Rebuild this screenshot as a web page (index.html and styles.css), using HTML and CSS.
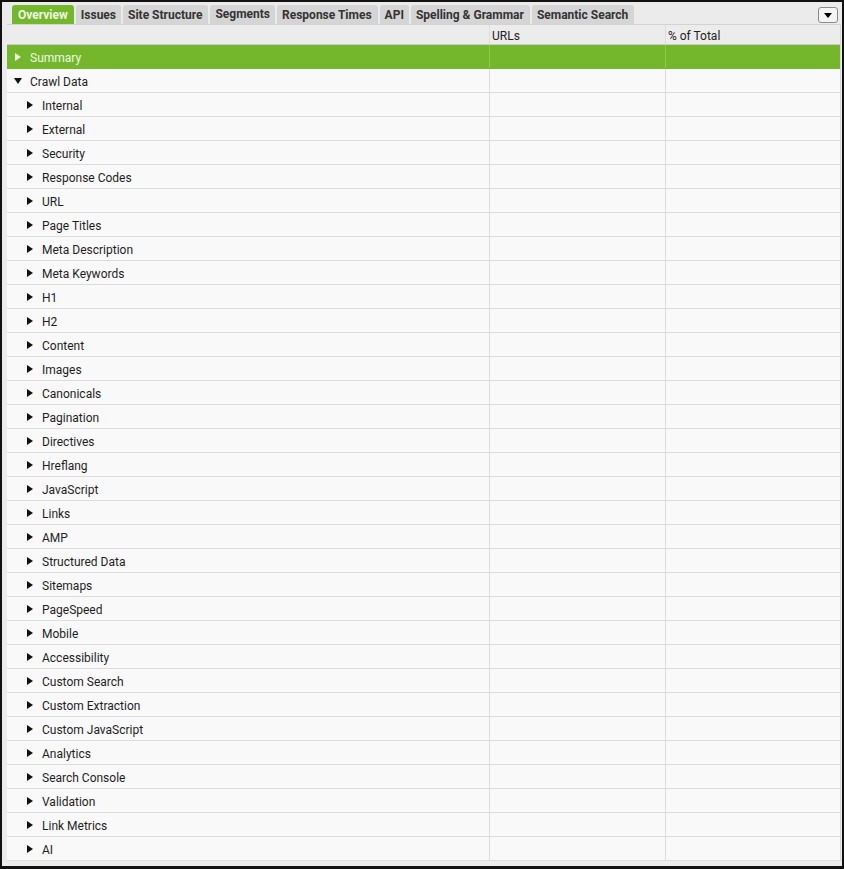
FILE: index.html
```html
<!DOCTYPE html>
<html>
<head>
<meta charset="utf-8">
<link rel="stylesheet" href="styles.css">
</head>
<body>
<div class="frame">
  <div class="tabbar">
    <div class="tabs">
      <div class="tab active">Overview</div>
      <div class="tab narrow">Issues</div>
      <div class="tab">Site Structure</div>
      <div class="tab hover narrow">Segments</div>
      <div class="tab">Response Times</div>
      <div class="tab narrow">API</div>
      <div class="tab">Spelling &amp; Grammar</div>
      <div class="tab">Semantic Search</div>
    </div>
    <div class="menu-btn"><span class="down-tri"></span></div>
  </div>
  <div class="table">
    <div class="row head">
      <div class="cell"></div>
      <div class="cell">URLs</div>
      <div class="cell">% of Total</div>
    </div>
    <div class="row selected">
      <div class="cell name lvl0"><span class="tri right"></span>Summary</div>
      <div class="cell"></div>
      <div class="cell"></div>
    </div>
    <div class="row">
      <div class="cell name lvl0"><span class="tri down"></span>Crawl Data</div>
      <div class="cell"></div>
      <div class="cell"></div>
    </div>
    <div class="row"><div class="cell name lvl1"><span class="tri right"></span>Internal</div><div class="cell"></div><div class="cell"></div></div>
    <div class="row"><div class="cell name lvl1"><span class="tri right"></span>External</div><div class="cell"></div><div class="cell"></div></div>
    <div class="row"><div class="cell name lvl1"><span class="tri right"></span>Security</div><div class="cell"></div><div class="cell"></div></div>
    <div class="row"><div class="cell name lvl1"><span class="tri right"></span>Response Codes</div><div class="cell"></div><div class="cell"></div></div>
    <div class="row"><div class="cell name lvl1"><span class="tri right"></span>URL</div><div class="cell"></div><div class="cell"></div></div>
    <div class="row"><div class="cell name lvl1"><span class="tri right"></span>Page Titles</div><div class="cell"></div><div class="cell"></div></div>
    <div class="row"><div class="cell name lvl1"><span class="tri right"></span>Meta Description</div><div class="cell"></div><div class="cell"></div></div>
    <div class="row"><div class="cell name lvl1"><span class="tri right"></span>Meta Keywords</div><div class="cell"></div><div class="cell"></div></div>
    <div class="row"><div class="cell name lvl1"><span class="tri right"></span>H1</div><div class="cell"></div><div class="cell"></div></div>
    <div class="row"><div class="cell name lvl1"><span class="tri right"></span>H2</div><div class="cell"></div><div class="cell"></div></div>
    <div class="row"><div class="cell name lvl1"><span class="tri right"></span>Content</div><div class="cell"></div><div class="cell"></div></div>
    <div class="row"><div class="cell name lvl1"><span class="tri right"></span>Images</div><div class="cell"></div><div class="cell"></div></div>
    <div class="row"><div class="cell name lvl1"><span class="tri right"></span>Canonicals</div><div class="cell"></div><div class="cell"></div></div>
    <div class="row"><div class="cell name lvl1"><span class="tri right"></span>Pagination</div><div class="cell"></div><div class="cell"></div></div>
    <div class="row"><div class="cell name lvl1"><span class="tri right"></span>Directives</div><div class="cell"></div><div class="cell"></div></div>
    <div class="row"><div class="cell name lvl1"><span class="tri right"></span>Hreflang</div><div class="cell"></div><div class="cell"></div></div>
    <div class="row"><div class="cell name lvl1"><span class="tri right"></span>JavaScript</div><div class="cell"></div><div class="cell"></div></div>
    <div class="row"><div class="cell name lvl1"><span class="tri right"></span>Links</div><div class="cell"></div><div class="cell"></div></div>
    <div class="row"><div class="cell name lvl1"><span class="tri right"></span>AMP</div><div class="cell"></div><div class="cell"></div></div>
    <div class="row"><div class="cell name lvl1"><span class="tri right"></span>Structured Data</div><div class="cell"></div><div class="cell"></div></div>
    <div class="row"><div class="cell name lvl1"><span class="tri right"></span>Sitemaps</div><div class="cell"></div><div class="cell"></div></div>
    <div class="row"><div class="cell name lvl1"><span class="tri right"></span>PageSpeed</div><div class="cell"></div><div class="cell"></div></div>
    <div class="row"><div class="cell name lvl1"><span class="tri right"></span>Mobile</div><div class="cell"></div><div class="cell"></div></div>
    <div class="row"><div class="cell name lvl1"><span class="tri right"></span>Accessibility</div><div class="cell"></div><div class="cell"></div></div>
    <div class="row"><div class="cell name lvl1"><span class="tri right"></span>Custom Search</div><div class="cell"></div><div class="cell"></div></div>
    <div class="row"><div class="cell name lvl1"><span class="tri right"></span>Custom Extraction</div><div class="cell"></div><div class="cell"></div></div>
    <div class="row"><div class="cell name lvl1"><span class="tri right"></span>Custom JavaScript</div><div class="cell"></div><div class="cell"></div></div>
    <div class="row"><div class="cell name lvl1"><span class="tri right"></span>Analytics</div><div class="cell"></div><div class="cell"></div></div>
    <div class="row"><div class="cell name lvl1"><span class="tri right"></span>Search Console</div><div class="cell"></div><div class="cell"></div></div>
    <div class="row"><div class="cell name lvl1"><span class="tri right"></span>Validation</div><div class="cell"></div><div class="cell"></div></div>
    <div class="row"><div class="cell name lvl1"><span class="tri right"></span>Link Metrics</div><div class="cell"></div><div class="cell"></div></div>
    <div class="row"><div class="cell name lvl1"><span class="tri right"></span>AI</div><div class="cell"></div><div class="cell"></div></div>
  </div>
</div>
</body>
</html>
```

FILE: styles.css
```css
* { box-sizing: border-box; }
html, body { margin: 0; padding: 0; }
body {
  font-family: Roboto, "Liberation Sans", Arial, sans-serif;
  font-size: 12px;
  color: #1e1e1e;
  background: #000;
}
.frame {
  width: 844px;
  height: 869px;
  border-style: solid;
  border-color: #111;
  border-width: 2px 2px 3px 2px;
  background: #ebebeb;
  display: flex;
  flex-direction: column;
}
.tabbar {
  height: 22px;
  display: flex;
  align-items: flex-end;
  justify-content: space-between;
  padding-left: 10px;
  padding-right: 4px;
}
.tabs {
  display: flex;
  gap: 2px;
  height: 19px;
}
.tab {
  height: 19px;
  padding: 2px 6px 0 5px;
  background: #d5d5d5;
  border-radius: 3px 3px 0 0;
  font-weight: bold;
  color: #333;
  line-height: 17px;
  white-space: nowrap;
}
.tab.narrow { padding-right: 5px; }
.tab.active { padding-left: 6px; }
.tab.hover { padding-top: 1px; }
.tab.active {
  background: #74b72c;
  color: #eef8e0;
}
.menu-btn {
  align-self: center;
  margin-top: 4px;
  width: 20px;
  height: 16px;
  border: 1px solid #8a8a8a;
  border-radius: 3px;
  background: #f4f4f4;
  display: flex;
  align-items: center;
  justify-content: center;
}
.down-tri {
  width: 0; height: 0;
  border-left: 4px solid transparent;
  border-right: 4px solid transparent;
  border-top: 5px solid #000;
}
.table {
  margin-left: 5px;
  width: 834px;
  border-top: 1px solid #d2d2d2;
  border-right: 1px solid #d6d6d6;
  flex: 0 0 auto;
}
.row {
  display: grid;
  grid-template-columns: 483px 176px 1fr;
  height: 24px;
  background: #f9f9f9;
  border-bottom: 1px solid #dcdcdc;
}
.row .cell {
  border-right: 1px solid #dedede;
  display: flex;
  align-items: center;
  padding-top: 2px;
  white-space: nowrap;
}
.row .cell:last-child { border-right: none; }
.row.head {
  height: 20px;
  background: #ececec;
  border-bottom: 1px solid #cdcdcd;
}
.row.head .cell { padding-left: 2px; color: #222; }
.row.head .cell:first-child { padding-left: 0; }
.row.selected {
  background: #74b72c;
  border-bottom-color: #74b72c;
  color: #eef8e0;
}
.row.selected .cell { border-right-color: #8ccb4a; }
.name.lvl0 { padding-left: 8px; }
.name.lvl1 { padding-left: 20px; }
.tri {
  display: inline-block;
  width: 0; height: 0;
  margin-right: 9px;
}
.tri.right {
  border-top: 4px solid transparent;
  border-bottom: 4px solid transparent;
  border-left: 6px solid #111;
  margin-top: -1px;
}
.row.selected .tri.right { border-left-color: #f2f9ea; }
.tri.down {
  border-left: 4px solid transparent;
  border-right: 4px solid transparent;
  border-top: 6px solid #111;
  margin-left: -1px;
  margin-right: 8px;
  margin-top: -1px;
}
```
